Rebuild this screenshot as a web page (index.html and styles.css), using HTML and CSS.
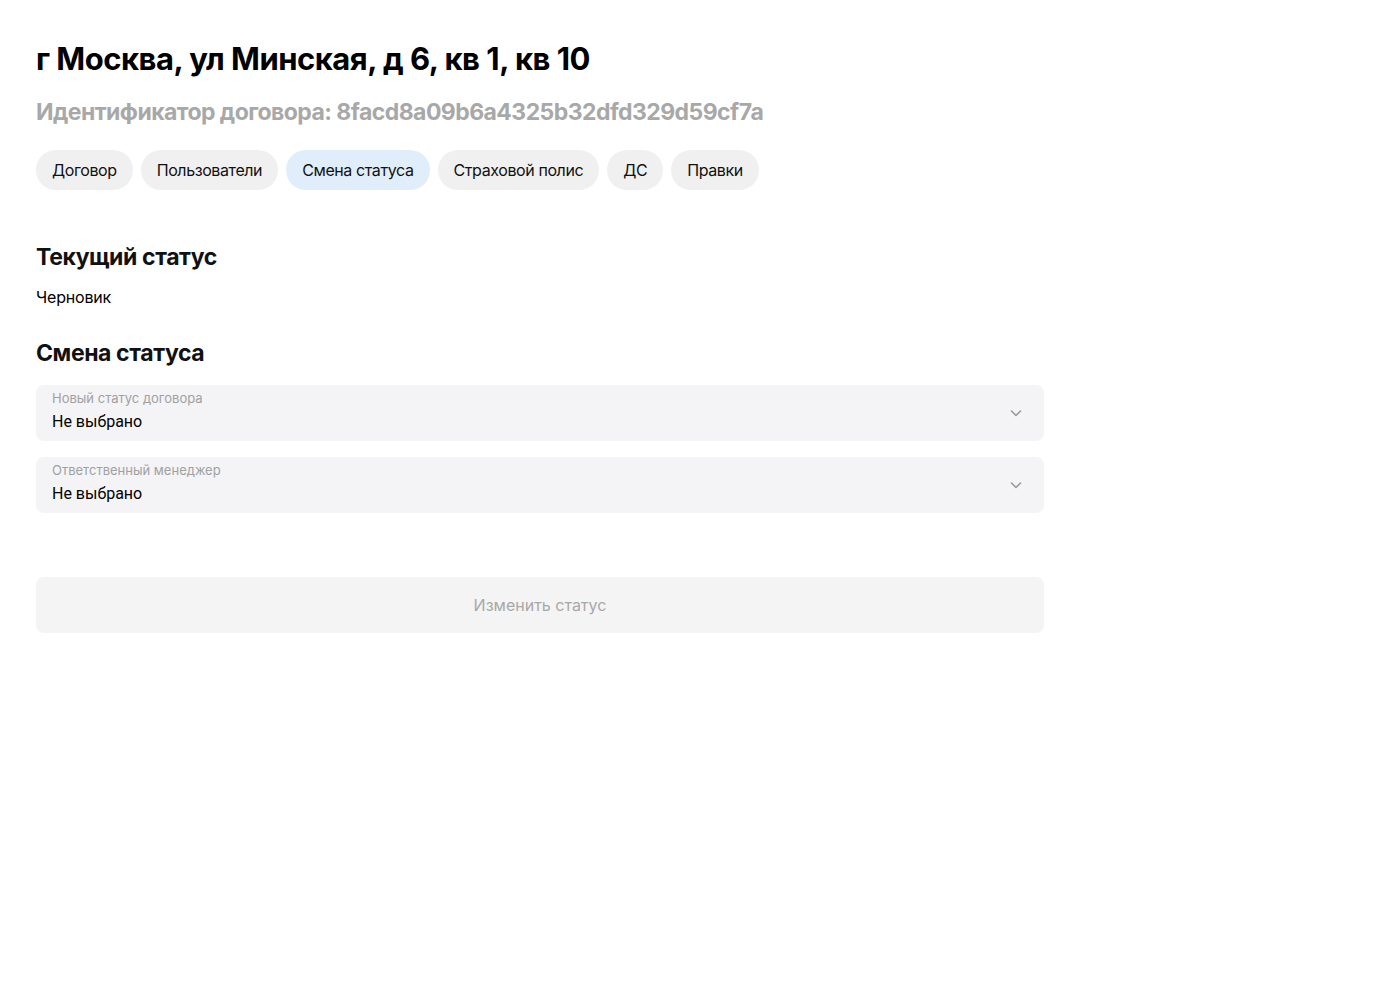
FILE: index.html
```html
<!DOCTYPE html>
<html lang="ru">
<head>
<meta charset="utf-8">
<link rel="stylesheet" href="styles.css">
</head>
<body>
<main class="page">
  <h1 class="title">г Москва, ул Минская, д 6, кв 1, кв 10</h1>
  <h2 class="subtitle">Идентификатор договора: 8facd8a09b6a4325b32dfd329d59cf7a</h2>
  <nav class="tabs">
    <span class="tab">Договор</span>
    <span class="tab">Пользователи</span>
    <span class="tab tab-active">Смена статуса</span>
    <span class="tab">Страховой полис</span>
    <span class="tab">ДС</span>
    <span class="tab">Правки</span>
  </nav>
  <section class="content">
    <h3 class="section-title">Текущий статус</h3>
    <p class="status">Черновик</p>
    <h3 class="section-title second">Смена статуса</h3>
    <div class="fields">
      <div class="select">
        <div class="select-text">
          <span class="select-label">Новый статус договора</span>
          <span class="select-value">Не выбрано</span>
        </div>
        <svg class="chevron" width="16" height="16" viewBox="0 0 16 16"><path d="M3.5 6 L8 10.5 L12.5 6" fill="none" stroke="#9a9a9e" stroke-width="1.6" stroke-linecap="round" stroke-linejoin="round"/></svg>
      </div>
      <div class="select">
        <div class="select-text">
          <span class="select-label">Ответственный менеджер</span>
          <span class="select-value">Не выбрано</span>
        </div>
        <svg class="chevron" width="16" height="16" viewBox="0 0 16 16"><path d="M3.5 6 L8 10.5 L12.5 6" fill="none" stroke="#9a9a9e" stroke-width="1.6" stroke-linecap="round" stroke-linejoin="round"/></svg>
      </div>
    </div>
    <button class="submit" disabled>Изменить статус</button>
  </section>
</main>
</body>
</html>
```
FILE: styles.css
```css
* { box-sizing: border-box; }
body {
  margin: 0;
  background: #fff;
  font-family: "Inter", "Roboto", "Liberation Sans", sans-serif;
  color: #000;
}
.page {
  padding: 38px 36px;
  width: 1080px;
}
.title {
  margin: 0;
  font-size: 31px;
  line-height: 42px;
  font-weight: 700;
  letter-spacing: -0.5px;
}
.subtitle {
  margin: 17px 0 0;
  font-size: 23px;
  line-height: 30px;
  font-weight: 700;
  color: #a8a8a8;
  letter-spacing: -0.55px;
}
.tabs {
  display: flex;
  gap: 8px;
  margin-top: 23px;
}
.tab {
  height: 40px;
  padding: 0 16px;
  border-radius: 20px;
  background: #f0f0f0;
  display: flex;
  align-items: center;
  font-size: 16px;
  letter-spacing: -0.4px;
  color: #111;
}
.tab-active { background: #e0eefb; }
.content { margin-top: 52px; }
.section-title {
  margin: 0;
  font-size: 23px;
  line-height: 30px;
  font-weight: 700;
  letter-spacing: -0.4px;
  color: #111;
}
.section-title.second { margin-top: 31px; }
.status {
  margin: 15px 0 0;
  font-size: 16px;
  line-height: 20px;
  letter-spacing: -0.2px;
}
.fields {
  margin-top: 17px;
  display: flex;
  flex-direction: column;
  gap: 16px;
  width: 1008px;
}
.select {
  height: 56px;
  border-radius: 8px;
  background: #f4f4f6;
  padding: 0 20px 0 16px;
  display: flex;
  align-items: center;
  justify-content: space-between;
}
.select-text {
  align-self: flex-start;
  padding-top: 5px;
  display: flex;
  flex-direction: column;
}
.select-label {
  font-size: 13px;
  line-height: 16px;
  color: #a0a0a4;
}
.select-value {
  margin-top: 6px;
  font-size: 16px;
  line-height: 20px;
  font-family: "Roboto", "Liberation Sans", sans-serif;
  color: #000;
}
.submit {
  margin-top: 64px;
  width: 1008px;
  height: 56px;
  border: 0;
  border-radius: 8px;
  background: #f4f4f4;
  color: #a8a8a8;
  font-family: inherit;
  font-size: 16px;
}
```
